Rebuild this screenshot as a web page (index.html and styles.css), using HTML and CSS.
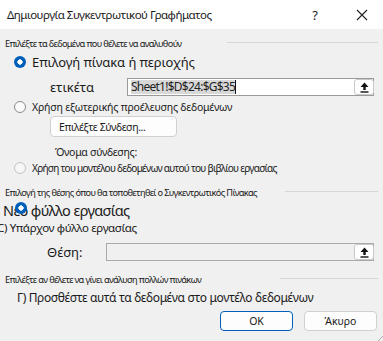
FILE: index.html
```html
<!DOCTYPE html>
<html lang="el">
<head>
    <meta charset="UTF-8">
    <meta name="viewport" content="width=device-width, initial-scale=1.0">
    <title>Δημιουργία Συγκεντρωτικού Γραφήματος</title>
    <link rel="stylesheet" href="styles.css">
</head>
<body>
    <div class="dialog">
        <div class="titlebar">
            <span class="title">Δημιουργία Συγκεντρωτικού Γραφήματος</span>
            <span class="title-btn help">?</span>
            <span class="title-btn close">
                <svg width="12" height="12" viewBox="0 0 12 12"><path d="M1 1L11 11M11 1L1 11" stroke="#222" stroke-width="1.1"/></svg>
            </span>
        </div>

        <div class="content">
            <div class="group-head head-data">
                <span>Επιλέξτε τα δεδομένα που θέλετε να αναλυθούν</span>
                <span class="rule"></span>
            </div>

            <div class="option option-main">
                <span class="radio checked"></span>
                <span>Επιλογή πίνακα ή περιοχής</span>
            </div>

            <div class="field field-range">
                <span class="field-label">ετικέτα</span>
                <div class="field-box">
                    <span class="selected-text">Sheet1!$D$24:$G$35</span>
                    <span class="caret"></span>
                    <span class="pick-btn">
                        <svg width="9" height="11" viewBox="0 0 9 11"><path d="M4.5 0.5L8.5 5H5.7V8H3.3V5H0.5Z" fill="#111"/><rect x="0.5" y="9.3" width="8" height="1.4" fill="#111"/></svg>
                    </span>
                </div>
            </div>

            <div class="option option-external">
                <span class="radio"></span>
                <span>Χρήση εξωτερικής προέλευσης δεδομένων</span>
            </div>

            <button class="btn btn-connect">Επιλέξτε Σύνδεση...</button>

            <div class="conn-name">Όνομα σύνδεσης:</div>

            <div class="option option-model">
                <span class="radio disabled"></span>
                <span>Χρήση του μοντέλου δεδομένων αυτού του βιβλίου εργασίας</span>
            </div>

            <div class="group-head head-place">
                <span>Επιλογή της θέσης όπου θα τοποθετηθεί ο Συγκεντρωτικός Πίνακας</span>
                <span class="rule"></span>
            </div>

            <div class="new-sheet">
                <span>Νέο φύλλο εργασίας</span>
                <span class="radio checked overlay"></span>
            </div>

            <div class="existing-sheet">C) Υπάρχον φύλλο εργασίας</div>

            <div class="field field-place">
                <span class="field-label">Θέση:</span>
                <div class="field-box disabled-box">
                    <span class="pick-btn">
                        <svg width="9" height="11" viewBox="0 0 9 11"><path d="M4.5 0.5L8.5 5H5.7V8H3.3V5H0.5Z" fill="#111"/><rect x="0.5" y="9.3" width="8" height="1.4" fill="#111"/></svg>
                    </span>
                </div>
            </div>

            <div class="group-head head-tables">
                <span>Επιλέξτε αν θέλετε να γίνει ανάλυση πολλών πινάκων</span>
                <span class="rule"></span>
            </div>

            <div class="data-model">Γ) Προσθέστε αυτά τα δεδομένα στο μοντέλο δεδομένων</div>

            <div class="actions">
                <button class="btn btn-action btn-primary">OK</button>
                <button class="btn btn-action">Άκυρο</button>
            </div>
        </div>
        <span class="grip"></span>
    </div>
</body>
</html>
```

FILE: styles.css
```css
* {
    box-sizing: border-box;
}

html, body {
    margin: 0;
    padding: 0;
}

body {
    width: 383px;
    height: 341px;
    overflow: hidden;
    font-family: "Noto Sans", "Open Sans", sans-serif;
    color: #1a1a1a;
    background-color: #f0f0f0;
}

.dialog {
    position: relative;
    width: 383px;
    height: 341px;
    overflow: hidden;
}

.titlebar {
    height: 29px;
    background-color: #ffffff;
    display: flex;
    align-items: center;
    padding-left: 7px;
    font-size: 11.5px;
}

.title {
    flex: 1;
    letter-spacing: -0.5px;
}

.title-btn {
    display: flex;
    align-items: center;
    justify-content: center;
}

.help {
    width: 12px;
    margin-right: 35px;
    font-size: 13px;
}

.close {
    width: 12px;
    margin-right: 15px;
}

.content {
    padding: 0 5px;
    display: flex;
    flex-direction: column;
}

/* group headings with a rule on the right */
.group-head {
    height: 14px;
    display: flex;
    align-items: center;
    font-size: 9.2px;
    letter-spacing: -0.62px;
    white-space: nowrap;
}

.group-head .rule {
    margin-left: auto;
    height: 1px;
    background-color: #d6d6d6;
    position: relative;
    top: -1px;
}

.head-data {
    margin-top: 7px;
}

.head-data .rule {
    width: 151px;
}

.head-place {
    margin-top: 10px;
}

.head-place .rule {
    width: 93px;
}

.head-tables {
    margin-top: 11px;
}

.head-tables .rule {
    width: 98px;
}

/* radio rows */
.option {
    height: 14px;
    display: flex;
    align-items: center;
    gap: 6px;
    padding-left: 9px;
    font-size: 10.5px;
    letter-spacing: -0.2px;
    white-space: nowrap;
}

.option-main {
    margin-top: 5px;
    font-size: 13px;
    letter-spacing: -0.1px;
}

.option-external {
    margin-top: 4px;
}

.option-model {
    margin-top: 2px;
    font-size: 10px;
    letter-spacing: -0.7px;
}

.radio {
    flex: none;
    width: 12px;
    height: 12px;
    border-radius: 50%;
    border: 1px solid #8a8a8a;
    background-color: #fbfbfb;
}

.radio.checked {
    border: none;
    background: radial-gradient(circle, #ffffff 0 2.4px, #005fb8 2.9px);
}

.radio.disabled {
    border-color: #c4c4c4;
    background-color: #f6f6f6;
}

/* reference fields */
.field {
    display: flex;
    align-items: center;
    height: 18px;
}

.field-range {
    margin-top: 9px;
}

.field-place {
    margin-top: 8px;
}

.field-label {
    font-size: 13px;
    padding-left: 45px;
}

.field-range .field-label {
    width: 122px;
}

.field-place .field-label {
    width: 101px;
    padding-left: 42px;
}

.field-box {
    position: relative;
    flex: 1;
    height: 18px;
    margin-right: 4px;
    border: 1px solid #9a9a9a;
    background-color: #ffffff;
    display: flex;
    align-items: center;
    padding-left: 3px;
}

.disabled-box {
    background-color: #f0f0f0;
    border-color: #a8a8a8;
}

.selected-text {
    background-color: #d8d8d8;
    font-size: 12px;
    line-height: 14px;
    letter-spacing: -0.75px;
    color: #222;
}

.caret {
    width: 1px;
    height: 14px;
    background-color: #111;
}

.pick-btn {
    margin-left: auto;
    width: 20px;
    height: 16px;
    border: 1px solid #c8c8c8;
    border-radius: 3px;
    background-color: #ffffff;
    display: flex;
    align-items: center;
    justify-content: center;
    margin-right: -1px;
}

/* buttons */
.btn {
    font-family: inherit;
    font-size: 10.5px;
    color: #1a1a1a;
    background-color: #fdfdfd;
    border: 1px solid #d0d0d0;
    border-radius: 4px;
    padding: 0;
    cursor: pointer;
}

.btn-connect {
    align-self: flex-start;
    margin-top: 2px;
    margin-left: 45px;
    width: 127px;
    height: 21px;
    text-align: left;
    padding-left: 8px;
    letter-spacing: -0.4px;
}

.conn-name {
    margin-top: 8px;
    height: 14px;
    line-height: 14px;
    padding-left: 50px;
    font-size: 10.5px;
    letter-spacing: -0.3px;
}

.new-sheet {
    position: relative;
    margin-top: 2px;
    margin-left: -2px;
    height: 19px;
    line-height: 19px;
    font-size: 14.5px;
    letter-spacing: -0.6px;
    white-space: nowrap;
}

.radio.overlay {
    position: absolute;
    left: 12px;
    top: 1px;
}

.existing-sheet {
    margin-left: -8px;
    height: 15px;
    line-height: 15px;
    font-size: 11.5px;
    letter-spacing: -0.35px;
    white-space: nowrap;
}

.data-model {
    margin-top: 4px;
    padding-left: 12px;
    height: 16px;
    line-height: 16px;
    font-size: 12px;
    letter-spacing: -0.35px;
    white-space: nowrap;
}

.actions {
    margin-top: 5px;
    display: flex;
    justify-content: flex-end;
    gap: 11px;
    padding-right: 1px;
}

.btn-action {
    width: 73px;
    height: 20px;
    text-align: center;
}

.btn-primary {
    border-color: #005fb8;
}

.grip {
    position: absolute;
    right: 0;
    bottom: 0;
    width: 6px;
    height: 6px;
    background: linear-gradient(135deg, transparent 0 55%, #b0b0b0 55% 65%, transparent 65%);
}
```
